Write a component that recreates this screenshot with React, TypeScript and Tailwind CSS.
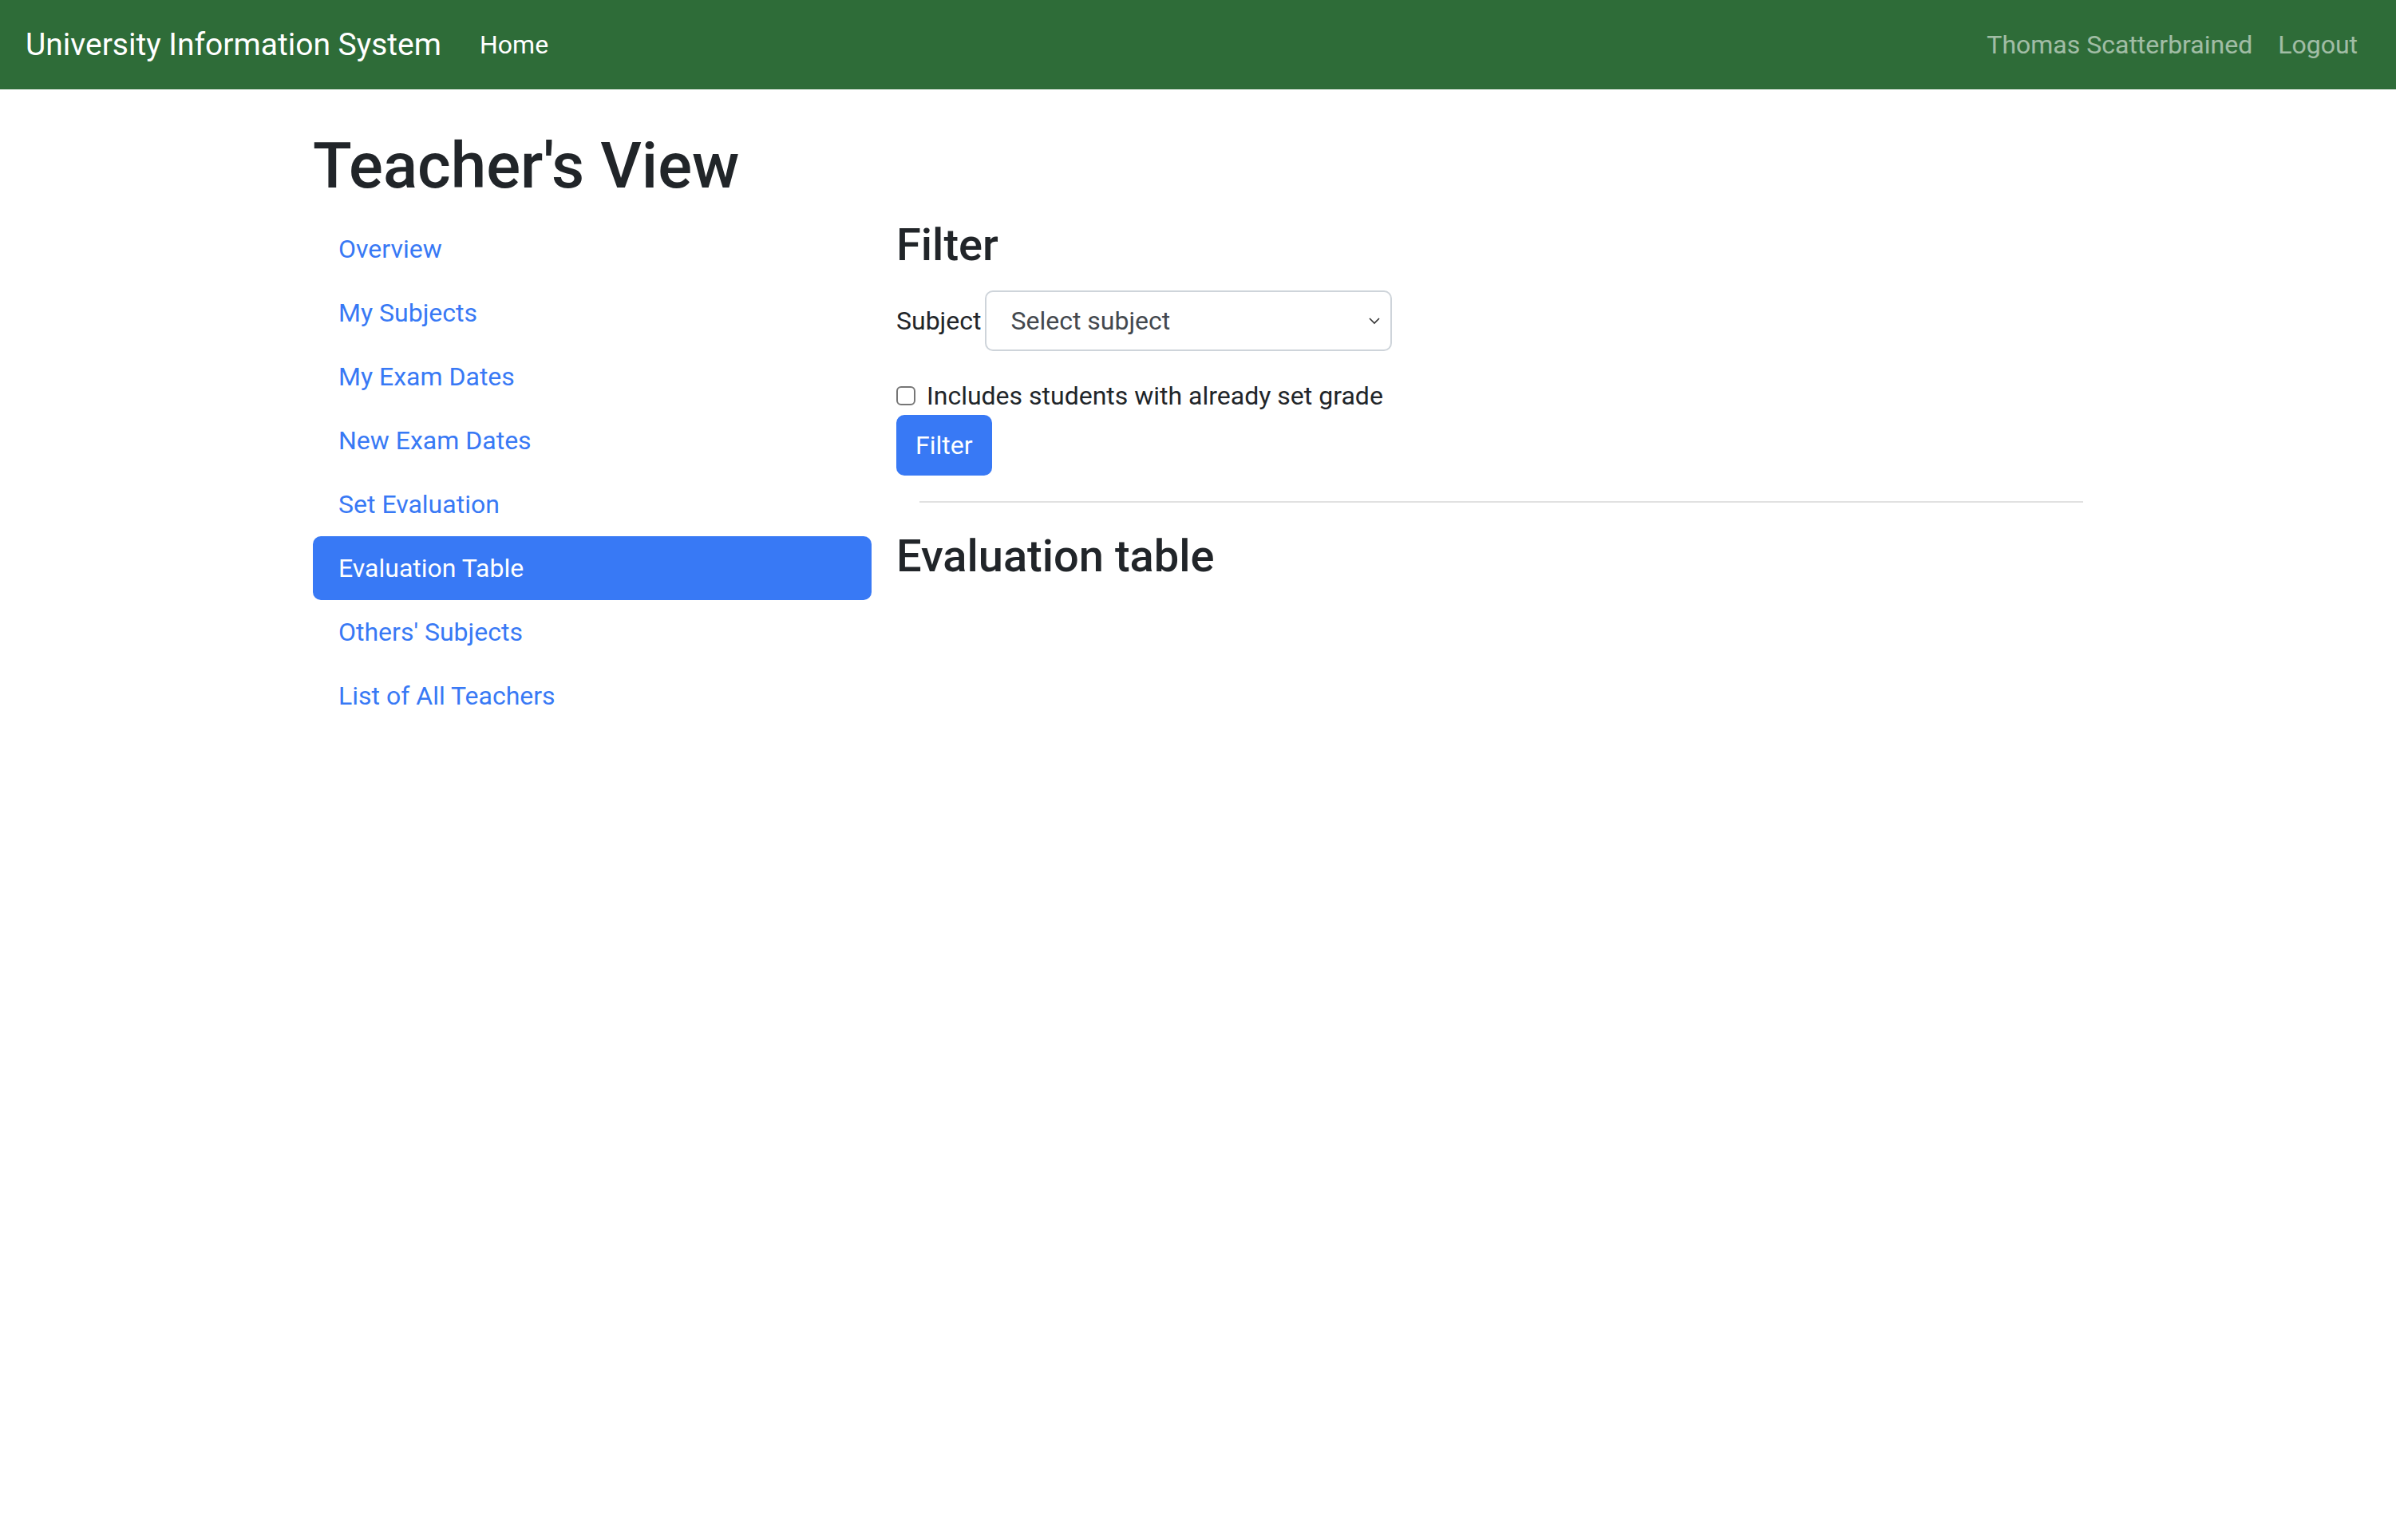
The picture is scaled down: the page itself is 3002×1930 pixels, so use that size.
import React from 'react';

const links = [
  'Overview',
  'My Subjects',
  'My Exam Dates',
  'New Exam Dates',
  'Set Evaluation',
  'Evaluation Table',
  "Others' Subjects",
  'List of All Teachers',
];

export default function App() {
  const active = 'Evaluation Table';

  return (
    <div className="min-h-screen bg-white text-[#212529] font-['Roboto',sans-serif]">
      {/* Navbar */}
      <nav className="h-[112px] bg-[#2e6c38] flex items-center justify-between px-[32px]">
        <div className="flex items-center">
          <a href="#" className="text-[39px] text-white leading-none mr-[32px]">University Information System</a>
          <a href="#" className="text-[32px] text-white px-[16px]">Home</a>
        </div>
        <div className="flex items-center text-[32px] text-white/55">
          <a href="#" className="px-[16px]">Thomas Scatterbrained</a>
          <a href="#" className="px-[16px]">Logout</a>
        </div>
      </nav>

      <div className="max-w-[2218px] mx-auto pt-[48px]">
        <h1 className="text-[80px] leading-[1.2] font-medium mb-[16px]">Teacher's View</h1>

        <div className="flex gap-[31px]">
          {/* Sidebar */}
          <div className="w-[700px] flex flex-col">
            {links.map((l) => (
              <a
                key={l}
                href="#"
                className={`h-[80px] px-[32px] flex items-center text-[32px] rounded-[10px] ${
                  l === active ? 'bg-[#3879f5] text-white' : 'text-[#3879f5]'
                }`}
              >
                {l}
              </a>
            ))}
          </div>

          {/* Main */}
          <div className="flex-1">
            <h3 className="text-[56px] leading-[1.2] font-medium mb-[23px] mt-[2px]">Filter</h3>

            <div className="flex items-center text-[32px]">
              <label className="mr-[5px]">Subject</label>
              <div className="relative w-[510px] h-[76px] border-2 border-[#ced4da] rounded-[10px] flex items-center pl-[30px] text-[#43484e]">
                Select subject
                <svg className="absolute right-[12px] top-1/2 -translate-y-1/2" width="16" height="10" viewBox="0 0 16 10">
                  <path d="M2 2 L8 8 L14 2" fill="none" stroke="#333" strokeWidth="1.6" />
                </svg>
              </div>
            </div>

            <div className="flex items-center text-[32px] leading-[1.5] mt-[32px]">
              <span className="w-[24px] h-[24px] border-2 border-[#767676] rounded-[6px] bg-white mr-[14px]"></span>
              <span>Includes students with already set grade</span>
            </div>

            <button className="h-[76px] px-[24px] bg-[#3879f5] text-white text-[32px] rounded-[10px]">Filter</button>

            <hr className="ml-[29px] mt-[32px] mb-[34px] border-0 h-[2px] bg-[#e1e1e1]" />

            <h3 className="text-[56px] leading-[1.2] font-medium">Evaluation table</h3>
          </div>
        </div>
      </div>
    </div>
  );
}
